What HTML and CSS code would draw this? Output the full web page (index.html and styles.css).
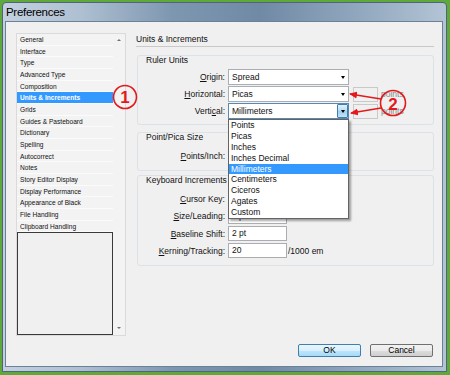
FILE: index.html
```html
<!DOCTYPE html>
<html lang="en">
<head>
<meta charset="UTF-8">
<meta name="viewport" content="width=device-width, initial-scale=1.0">
<title>Preferences</title>
<link rel="stylesheet" href="styles.css">
</head>
<body>
<div class="window">
  <div class="titlebar">Preferences</div>
  <div class="client">
    <div class="content">
      <div class="listbox">
        <div class="list-area">
          <ul class="pages">
            <li>General</li>
            <li>Interface</li>
            <li>Type</li>
            <li>Advanced Type</li>
            <li>Composition</li>
            <li class="selected">Units &amp; Increments</li>
            <li>Grids</li>
            <li>Guides &amp; Pasteboard</li>
            <li>Dictionary</li>
            <li>Spelling</li>
            <li>Autocorrect</li>
            <li>Notes</li>
            <li>Story Editor Display</li>
            <li>Display Performance</li>
            <li>Appearance of Black</li>
            <li>File Handling</li>
            <li>Clipboard Handling</li>
          </ul>
          <div class="pages-empty"></div>
        </div>
        <div class="scrollbar">
          <span class="scroll-up"></span>
          <span class="scroll-down"></span>
        </div>
      </div>

      <div class="panel">
        <h1>Units &amp; Increments</h1>

        <div class="group ruler">
          <div class="group-title">Ruler Units</div>
          <div class="row">
            <label><u>O</u>rigin:</label>
            <div class="select"><span>Spread</span><span class="arrow"></span></div>
          </div>
          <div class="row">
            <label><u>H</u>orizontal:</label>
            <div class="select"><span>Picas</span><span class="arrow"></span></div>
            <div class="mini"></div>
            <span class="unit">points</span>
          </div>
          <div class="row">
            <label>Verti<u>c</u>al:</label>
            <div class="select open">
              <span>Millimeters</span>
              <span class="arrow-btn"><span class="arrow"></span></span>
              <ul class="menu">
                <li>Points</li>
                <li>Picas</li>
                <li>Inches</li>
                <li>Inches Decimal</li>
                <li class="hover">Millimeters</li>
                <li>Centimeters</li>
                <li>Ciceros</li>
                <li>Agates</li>
                <li>Custom</li>
              </ul>
            </div>
            <div class="mini"></div>
            <span class="unit">points</span>
          </div>
        </div>

        <div class="group pica">
          <div class="group-title">Point/Pica Size</div>
          <div class="row">
            <label><u>P</u>oints/Inch:</label>
            <div class="select"><span></span><span class="arrow"></span></div>
          </div>
        </div>

        <div class="group keys">
          <div class="group-title">Keyboard Increments</div>
          <div class="row">
            <label><u>C</u>ursor Key:</label>
            <div class="field"></div>
          </div>
          <div class="row">
            <label><u>S</u>ize/Leading:</label>
            <div class="field">2 pt</div>
          </div>
          <div class="row">
            <label><u>B</u>aseline Shift:</label>
            <div class="field">2 pt</div>
          </div>
          <div class="row">
            <label><u>K</u>erning/Tracking:</label>
            <div class="field">20</div>
            <span class="suffix">/1000 em</span>
          </div>
        </div>
      </div>
    </div>

    <div class="buttons">
      <button class="btn default">OK</button>
      <button class="btn">Cancel</button>
    </div>
  </div>
</div>

<!-- red callouts drawn over the dialog -->
<svg class="callouts" width="450" height="375" viewBox="0 0 450 375">
  <defs>
    <marker id="head" markerWidth="8" markerHeight="8" refX="7" refY="4" orient="auto" markerUnits="userSpaceOnUse">
      <path d="M0,0.5 L8,4 L0,7.5 Z" fill="#e3191c"/>
    </marker>
  </defs>
  <circle cx="125" cy="97" r="11.5" fill="none" stroke="#e3191c" stroke-width="1.6"/>
  <text x="125" y="103" class="callout-num">1</text>
  <line x1="381" y1="99" x2="350" y2="94" stroke="#e3191c" stroke-width="1.3" marker-end="url(#head)"/>
  <line x1="381" y1="108" x2="351" y2="113" stroke="#e3191c" stroke-width="1.3" marker-end="url(#head)"/>
  <circle cx="393" cy="103" r="12.5" fill="none" stroke="#e3191c" stroke-width="1.6"/>
  <text x="393" y="110" class="callout-num">2</text>
</svg>
</body>
</html>
```

FILE: styles.css
```css
body {
  margin: 0;
  background-color: #5fa93a;
  font-family: "Liberation Sans", Arial, sans-serif;
  position: relative;
  width: 450px;
  height: 375px;
  overflow: hidden;
}

/* window frame */
.window {
  margin: 2px 3px 0 2px;
  width: 445px;
  height: 370px;
  box-sizing: border-box;
  border: 1px solid #50657a;
  border-radius: 4px 4px 0 0;
  background: linear-gradient(90deg, #c3d1df 0%, #adbfd1 18%, #7e97b1 38%, #7089a5 58%, #90a7be 80%, #b3c4d5 100%);
  display: flex;
  flex-direction: column;
}

.titlebar {
  height: 18px;
  line-height: 18px;
  padding-left: 3px;
  font-size: 11.5px;
  letter-spacing: -0.3px;
  color: #000;
}

.client {
  flex: 1;
  margin: 0 3px 4px 2px;
  background-color: #f0f0f0;
  border: 1px solid #6c8196;
  display: flex;
  flex-direction: column;
}

.content {
  display: flex;
  padding: 11px 0 0 10px;
}

/* page list on the left */
.listbox {
  display: flex;
  width: 110px;
  height: 303px;
  box-sizing: border-box;
  border: 1px solid #dadada;
  background-color: #f3f3f3;
}

.list-area {
  width: 96px;
  display: flex;
  flex-direction: column;
}

.pages {
  list-style: none;
  margin: 0;
  padding: 0;
}

.pages li {
  height: 11.66px;
  line-height: 11.66px;
  box-sizing: border-box;
  border-bottom: 1px solid #fbfbfb;
  padding-left: 3px;
  font-size: 6.6px;
  color: #111;
  white-space: nowrap;
}

.pages li.selected {
  background-color: #3399ff;
  color: #fff;
  font-weight: bold;
}

.pages-empty {
  margin-top: 0;
  height: 101px;
  border: 1px solid #3a3a3a;
  background-color: #f0f0f0;
}

.scrollbar {
  flex: 1;
  display: flex;
  flex-direction: column;
  justify-content: space-between;
  align-items: center;
  padding: 5px 0 6px;
}

.scroll-up {
  width: 0;
  height: 0;
  border-left: 2px solid transparent;
  border-right: 2px solid transparent;
  border-bottom: 2px solid #707070;
}

.scroll-down {
  width: 0;
  height: 0;
  border-left: 2.5px solid transparent;
  border-right: 2.5px solid transparent;
  border-top: 2px solid #707070;
}

/* settings panel */
.panel {
  margin-left: 10px;
  width: 298px;
  font-size: 8.5px;
  color: #111;
}

.panel h1 {
  margin: 0;
  height: 13px;
  line-height: 12px;
  font-size: 8.5px;
  font-weight: normal;
  border-bottom: 1px solid #c9c9c9;
}

.group {
  margin-left: 1px;
  border: 1px solid #dbe2e9;
  border-radius: 3px;
}

.group-title {
  height: 9px;
  line-height: 9px;
  margin-left: 8px;
}

.ruler {
  margin-top: 8px;
  padding-bottom: 5px;
}

.ruler .group-title {
  margin-bottom: 4px;
}

.pica {
  margin-top: 7px;
  padding-bottom: 6px;
}

.pica .group-title {
  margin-bottom: 6px;
}

.keys {
  margin-top: 4px;
  padding-bottom: 6px;
}

.keys .group-title {
  margin-bottom: 6px;
}

.row {
  display: flex;
  align-items: center;
  height: 16px;
  margin-bottom: 1px;
}

.keys .row {
  margin-bottom: 1.33px;
}

.row:last-child {
  margin-bottom: 0;
}

.row label {
  width: 87px;
  margin-right: 3px;
  text-align: right;
}

.select {
  position: relative;
  width: 121px;
  height: 16px;
  box-sizing: border-box;
  border: 1px solid #a9aeb5;
  background-color: #fff;
  display: flex;
  align-items: center;
  justify-content: space-between;
  padding-left: 3px;
}

.arrow {
  width: 0;
  height: 0;
  margin-right: 3px;
  border-left: 2.5px solid transparent;
  border-right: 2.5px solid transparent;
  border-top: 3px solid #000;
}

.open {
  border-color: #5b88b0;
}

.arrow-btn {
  width: 11px;
  height: 14px;
  box-sizing: border-box;
  border: 1px solid #3c7fb1;
  border-radius: 1px;
  background: linear-gradient(#e3f1fb, #b6dbf4 50%, #9dcdef 51%, #c4e3f7);
  display: flex;
  align-items: center;
  justify-content: center;
}

.arrow-btn .arrow {
  margin: 0;
}

.menu {
  position: absolute;
  top: 15px;
  left: -1px;
  width: 121px;
  box-sizing: border-box;
  margin: 0;
  padding: 0;
  list-style: none;
  background-color: #fff;
  border: 1px solid #646464;
  box-shadow: 2px 2px 2px rgba(0, 0, 0, 0.35);
  z-index: 2;
}

.menu li {
  height: 10.9px;
  line-height: 10.9px;
  padding-left: 2px;
}

.menu li.hover {
  background-color: #3399ff;
  color: #fff;
}

.mini {
  width: 25px;
  height: 15px;
  box-sizing: border-box;
  margin-left: 4px;
  border: 1px solid #c9c9c9;
  background-color: #f0f0f0;
}

.unit {
  margin-left: 3px;
  color: #8a8a8a;
}

.field {
  width: 59px;
  height: 15px;
  line-height: 13px;
  box-sizing: border-box;
  border: 1px solid #abadb3;
  background-color: #fff;
  padding-left: 3px;
}

.suffix {
  margin-left: 1px;
}

/* dialog buttons */
.buttons {
  margin-top: auto;
  display: flex;
  justify-content: flex-end;
  gap: 9px;
  padding: 0 9px 9px 0;
}

.btn {
  width: 63px;
  height: 13px;
  padding: 0;
  font-family: "Liberation Sans", Arial, sans-serif;
  font-size: 8.5px;
  line-height: 11px;
  color: #000;
  border: 1px solid #707070;
  border-radius: 2px;
  background: linear-gradient(#f2f2f2, #ebebeb 50%, #dddddd 51%, #cfcfcf);
}

.btn.default {
  border-color: #3c7fb1;
  background: linear-gradient(#eaf6fd, #d9f0fc 50%, #bee6fd 51%, #a7d9f5);
}

.callouts {
  position: absolute;
  top: 0;
  left: 0;
  pointer-events: none;
}

.callout-num {
  font-family: "Liberation Sans", Arial, sans-serif;
  font-size: 17px;
  font-weight: bold;
  fill: #e3191c;
  text-anchor: middle;
}
```
